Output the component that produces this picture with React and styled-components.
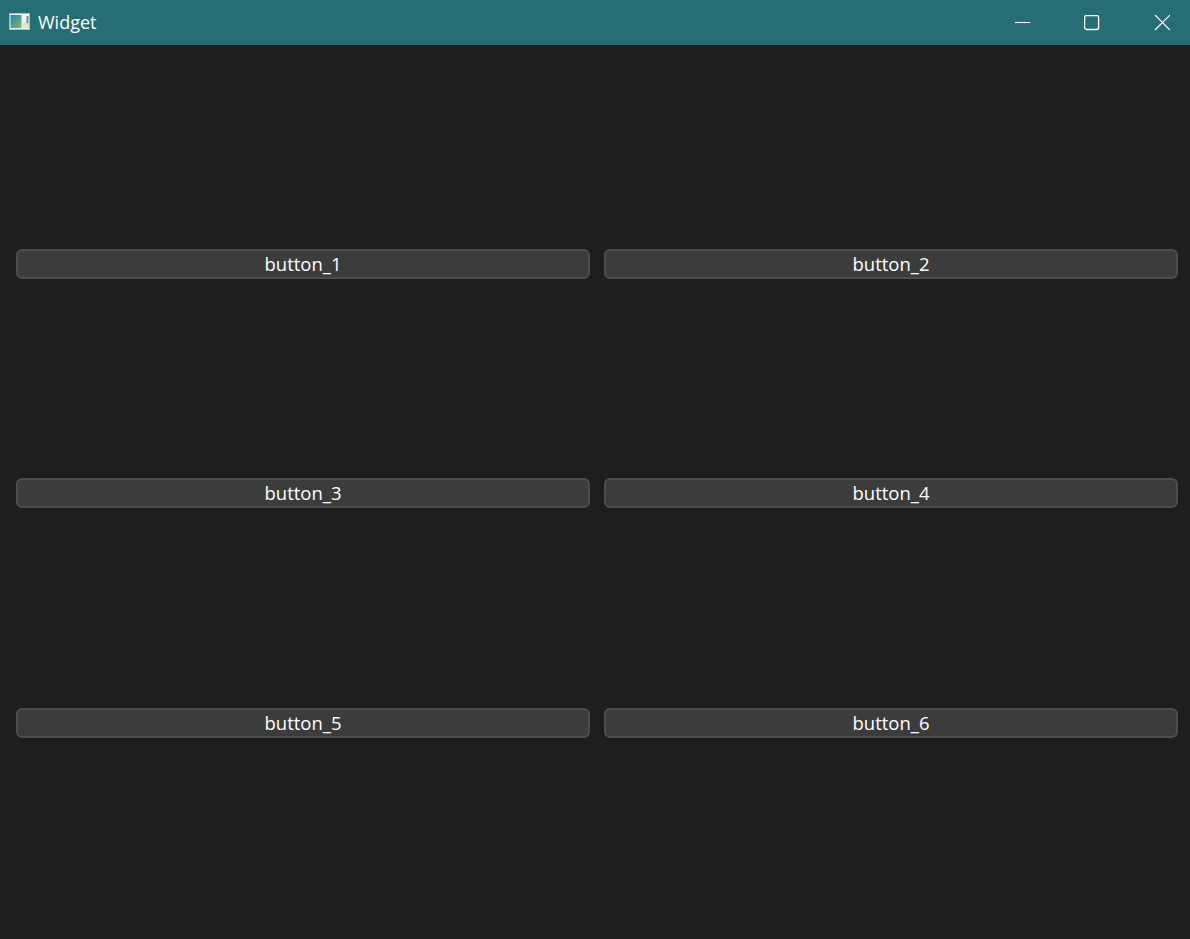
import React from 'react';
import styled, { createGlobalStyle } from 'styled-components';

const buttons = ['button_1', 'button_2', 'button_3', 'button_4', 'button_5', 'button_6'];

export default function App() {
  return (
    <>
      <GlobalStyle />
      <Window>
        <TitleBar>
          <AppIcon viewBox='0 0 21 17' aria-hidden='true'>
            <defs>
              <linearGradient id='pane' x1='0' y1='0' x2='1' y2='1'>
                <stop offset='0' stopColor='#2f7fa8' />
                <stop offset='1' stopColor='#7db86f' />
              </linearGradient>
            </defs>
            <rect x='0.5' y='0.5' width='20' height='16' fill='#f0f2f2' stroke='#b4bbbe' />
            <rect x='1.5' y='2' width='11' height='13' fill='url(#pane)' />
            <rect x='14' y='9' width='3' height='6' fill='#e2e0c8' />
            <rect x='17.5' y='3' width='2' height='7' fill='#5f9488' />
            <rect x='17.5' y='10' width='2' height='5' fill='#d6dccf' />
          </AppIcon>
          <Title>Widget</Title>
          <WindowControls>
            <ControlButton aria-label='Minimize'>
              <svg width='16' height='16' viewBox='0 0 16 16'>
                <path d='M1 7.5H16' stroke='#fff' strokeWidth='1.1' fill='none' />
              </svg>
            </ControlButton>
            <ControlButton aria-label='Maximize'>
              <svg width='16' height='16' viewBox='0 0 16 16'>
                <rect x='0.6' y='0.5' width='14' height='14' rx='2' stroke='#fff' strokeWidth='1.3' fill='none' />
              </svg>
            </ControlButton>
            <ControlButton aria-label='Close'>
              <svg width='16' height='16' viewBox='0 0 16 16'>
                <path d='M1 0L16 15M16 0L1 15' stroke='#fff' strokeWidth='1.2' fill='none' />
              </svg>
            </ControlButton>
          </WindowControls>
        </TitleBar>
        <ButtonGrid>
          {buttons.map((label) => (
            <PushButton key={label}>{label}</PushButton>
          ))}
        </ButtonGrid>
      </Window>
    </>
  );
}

const GlobalStyle = createGlobalStyle`
  html,
  body {
    margin: 0;
    padding: 0;
    background: #1e1e1e;
  }
`;

const Window = styled.div`
  width: 1190px;
  height: 939px;
  display: flex;
  flex-direction: column;
  overflow: hidden;
  background-color: #1e1e1e;
  font-family: 'Open Sans', 'Noto Sans', sans-serif;
`;

const TitleBar = styled.div`
  height: 45px;
  flex-shrink: 0;
  display: flex;
  align-items: center;
  padding-left: 9px;
  background-color: #266d75;
`;

const AppIcon = styled.svg`
  width: 21px;
  height: 17px;
  margin-top: -2px;
`;

const Title = styled.span`
  margin-left: 8px;
  color: #fff;
  font-size: 18px;
  margin-top: -1px;
`;

const WindowControls = styled.div`
  margin-left: auto;
  display: flex;
  gap: 14px;
`;

const ControlButton = styled.button`
  width: 56px;
  height: 45px;
  padding: 0;
  border: 0;
  background: transparent;
  display: flex;
  align-items: center;
  justify-content: center;
`;

const ButtonGrid = styled.div`
  display: grid;
  grid-template-columns: 574px 574px;
  grid-template-rows: 229px 230px 30px;
  column-gap: 14px;
  padding: 204px 12px 0 16px;
`;

const PushButton = styled.button`
  align-self: start;
  height: 30px;
  padding: 0;
  border: 2px solid #4d4d4d;
  border-radius: 6px;
  background-color: #3c3c3c;
  color: #fff;
  font-family: inherit;
  font-size: 18.5px;
  line-height: 26px;
`;
